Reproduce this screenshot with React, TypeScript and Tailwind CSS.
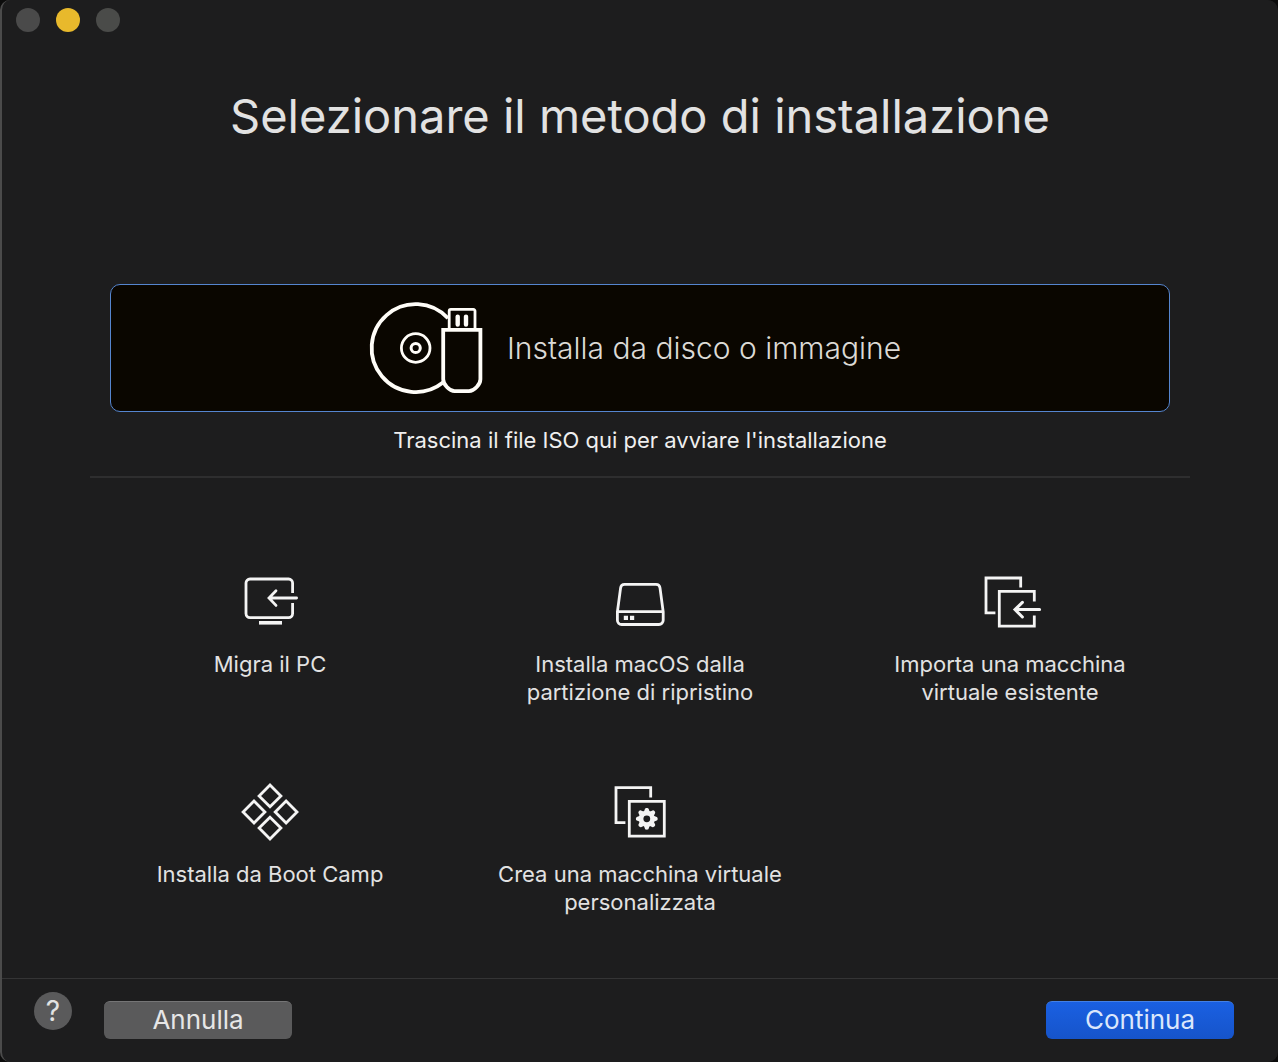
import type { ReactNode } from "react";

const DiscUsbIcon = () => (
  <svg viewBox="0 0 120 96" className="h-24 w-[120px] shrink-0" fill="none" stroke="#fffdf8" aria-hidden="true">
    <path d="M81 18.3A44 44 0 1 0 76 82.6" strokeWidth="3.8" />
    <circle cx="48.7" cy="48" r="14.3" strokeWidth="2.8" />
    <circle cx="48.7" cy="48" r="4.6" strokeWidth="3" />
    <path d="M82.2 29V11a1.6 1.6 0 0 1 1.6-1.6h22.6a1.6 1.6 0 0 1 1.6 1.6v18" strokeWidth="2.8" />
    <path d="M90.7 16.6v8M99 16.6v8" strokeWidth="4.4" strokeLinecap="round" />
    <path d="M76.2 29.8h37.2v49.4c0 5-6 12-11.4 12H87.6c-5.4 0-11.4-7-11.4-12z" strokeWidth="3.8" />
  </svg>
);

const ItemIcon = ({ children }: { children: ReactNode }) => (
  <svg viewBox="0 0 60 60" className="size-[60px] overflow-visible" fill="none" stroke="#f4f4f4" strokeWidth="2.8" aria-hidden="true">
    {children}
  </svg>
);

const gearTeeth = [0, 45, 90, 135, 180, 225, 270, 315];

const items = [
  {
    id: "migrate",
    lines: ["Migra il PC"],
    icon: (
      <>
        <path d="M52.6 21V11a4 4 0 0 0-4-4H10a4 4 0 0 0-4 4v30.6a4 4 0 0 0 4 4h38.6a4 4 0 0 0 4-4V31" />
        <path d="M56.6 26H29.6M36 18.8L29 26l7 7.4" strokeLinecap="round" />
        <path d="M19 50.8h23" strokeWidth="3.6" />
      </>
    ),
  },
  {
    id: "recovery",
    lines: ["Installa macOS dalla", "partizione di ripristino"],
    icon: (
      <>
        <path d="M14.6 12.4h31.4a4 4 0 0 1 4 3.5l3.2 24v8.4a4.2 4.2 0 0 1-4.2 4.2H11.6a4.2 4.2 0 0 1-4.2-4.2v-8.4l3.2-24a4 4 0 0 1 4-3.5z" />
        <path d="M7.4 39.6h45.8" />
        <path d="M13.8 43.8h4.2v4.2h-4.2zM20 43.8h4.2v4.2H20z" fill="#f4f4f4" stroke="none" />
      </>
    ),
  },
  {
    id: "import",
    lines: ["Importa una macchina", "virtuale esistente"],
    icon: (
      <>
        <path d="M40.7 15.4V6H6v34.8h9.4" />
        <path d="M54.3 29.4V19.4h-35v34.8h35V43.6" />
        <path d="M59.6 37.6H35.6M42.4 30.4L35 37.6l7.4 7.4" strokeWidth="3" strokeLinecap="round" />
      </>
    ),
  },
  {
    id: "bootcamp",
    lines: ["Installa da Boot Camp"],
    icon: (
      <path d="M30 3l10.9 10.9L30 24.8 19.1 13.9zM14 19.1L24.9 30 14 40.9 3.1 30zM46.1 19.1L57 30 46.1 40.9 35.2 30zM30 35.2L40.9 46.1 30 57 19.1 46.1z" />
    ),
  },
  {
    id: "custom",
    lines: ["Crea una macchina virtuale", "personalizzata"],
    icon: (
      <>
        <path d="M40.7 15.4V5.6H6v35h9.4" />
        <path d="M19.3 19.4h35v34.8h-35z" />
        <circle cx="36.8" cy="36.8" r="5.7" strokeWidth="4.6" />
        {gearTeeth.map(angle => (
          <path
            key={angle}
            d="M33.8 30l1.2-3.2c.4-1.2 3.2-1.2 3.6 0l1.2 3.2z"
            transform={`rotate(${angle} 36.8 36.8)`}
            fill="#f4f4f4"
            stroke="none"
          />
        ))}
      </>
    ),
  },
];

export default function App() {
  return (
    <div className="bg-[#0c0c0c] font-['Inter','Liberation_Sans',sans-serif]">
      <main className="flex min-h-screen flex-col rounded-[10px] border-l-2 border-[#4b4b4b] bg-[#1d1d1e] text-[#e2e2e2]">
        <header className="flex h-10 items-center gap-4 px-3.5">
          <button type="button" aria-label="Chiudi" className="size-6 rounded-full bg-[#4a4a4a]" />
          <button type="button" aria-label="Riduci" className="size-6 rounded-full bg-[#e8b92c]" />
          <button type="button" aria-label="Ingrandisci" className="size-6 rounded-full bg-[#4a4b49]" />
        </header>

        <h1 className="mt-11 text-center text-[47px] leading-16">Selezionare il metodo di installazione</h1>

        <section className="mx-[88px] mt-[136px] flex flex-col items-center border-b-2 border-[#2e2e2f] px-5 pb-[22px]">
          <button
            type="button"
            className="flex h-32 w-full items-center justify-center gap-5 rounded-[10px] border border-[#5585cf] bg-[#0a0600] pr-3"
          >
            <DiscUsbIcon />
            <span className="text-[30px] font-light text-[#dcdad6]">Installa da disco o immagine</span>
          </button>
          <p className="mt-3.5 text-[22px] leading-7 text-[#efefef]">Trascina il file ISO qui per avviare l'installazione</p>
        </section>

        <div className="mx-[83px] mt-[94px] grid grid-cols-3 gap-y-[76px]">
          {items.map(item => (
            <button key={item.id} type="button" className="flex flex-col items-center justify-start">
              <ItemIcon>{item.icon}</ItemIcon>
              <span className="mt-[18px] text-[22px] leading-7">
                {item.lines.map(line => (
                  <span key={line} className="block whitespace-nowrap">
                    {line}
                  </span>
                ))}
              </span>
            </button>
          ))}
        </div>

        <footer className="mt-auto flex h-21 items-start border-t border-[#343435] pr-11 pl-8">
          <button type="button" aria-label="Aiuto" className="mt-[13px] size-[38px] rounded-full bg-[#5a5a5b] text-[28px] leading-[38px]">
            ?
          </button>
          <button
            type="button"
            className="mt-[22px] ml-8 h-[38px] w-[188px] rounded-md border-t border-[#757576] bg-[#5a5a5b] pb-0.5 text-[26px] leading-9 text-[#e6e6e6]"
          >
            Annulla
          </button>
          <button
            type="button"
            className="mt-[22px] ml-auto h-[38px] w-[188px] rounded-md border-t border-[#4380e6] bg-linear-to-b from-[#1a60e2] to-[#1654ca] pb-0.5 text-[26px] leading-9 text-[#dbe7fb]"
          >
            Continua
          </button>
        </footer>
      </main>
    </div>
  );
}
